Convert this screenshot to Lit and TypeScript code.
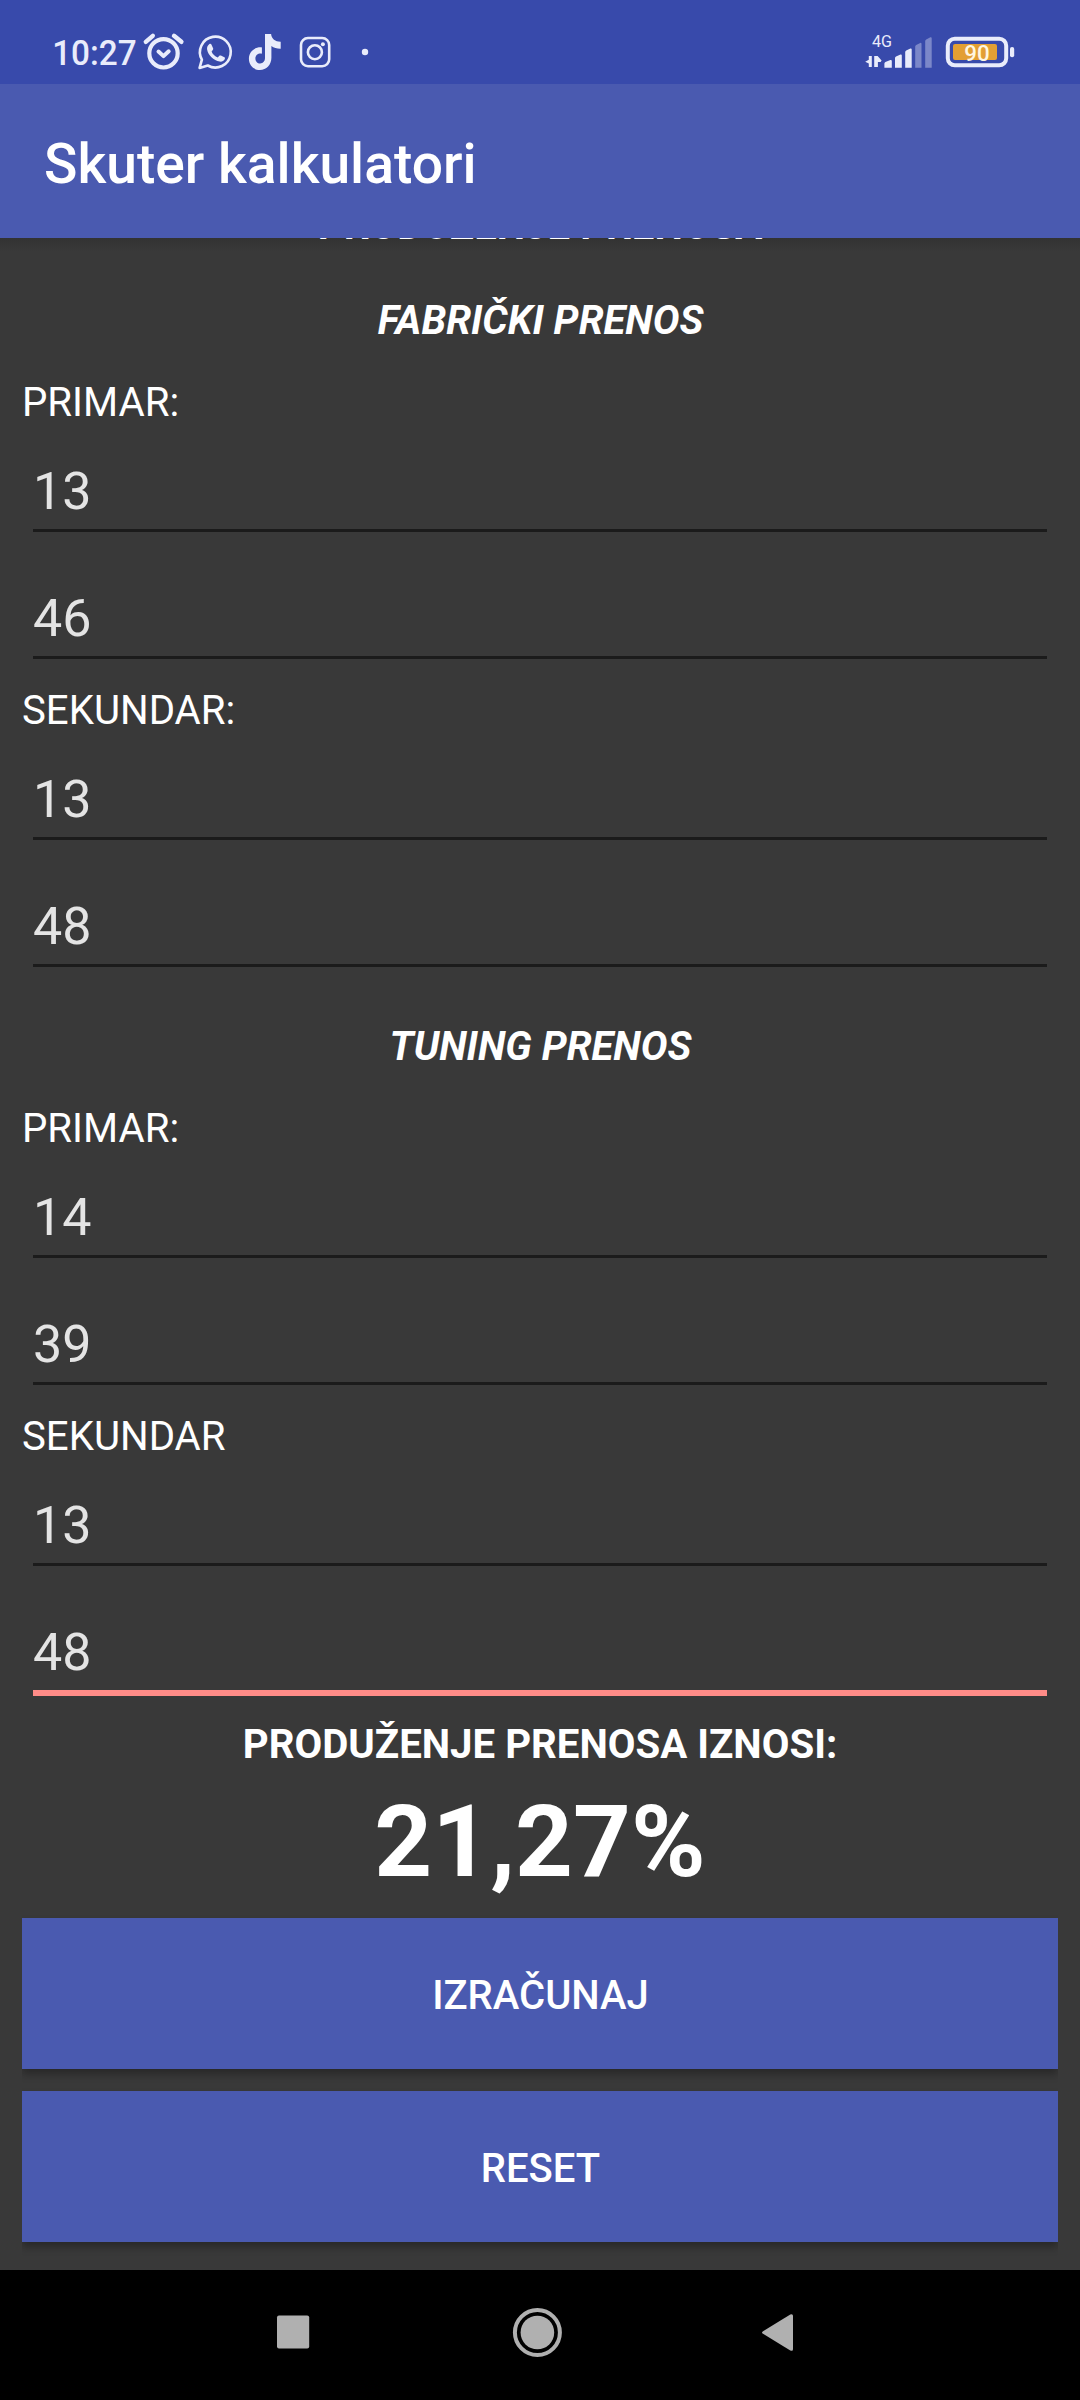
import { LitElement, html, css, svg } from "lit";
import { customElement, property } from "lit/decorators.js";
import { classMap } from "lit/directives/class-map.js";

@customElement("status-bar")
class StatusBar extends LitElement {
  static styles = css`
    :host {
      display: block;
      height: 84px;
      background: #384aab;
      color: #e9ecfb;
      font-family: Roboto, "Liberation Sans", sans-serif;
    }
    svg {
      display: block;
      width: 1080px;
      height: 84px;
    }
    .clock {
      font-size: 34.4px;
      font-weight: 500;
    }
    .net {
      font-size: 16px;
    }
    .charge {
      font-size: 22.8px;
      font-weight: 500;
      fill: #fff6e0;
    }
  `;

  render() {
    return html`<svg viewBox="0 0 1080 84" fill="#e9ecfb">
      ${svg`
        <text class="clock" x="52.2" y="65" textLength="84.5" lengthAdjust="spacingAndGlyphs">10:27</text>

        <g fill="none" stroke="#e9ecfb" stroke-width="4.4" stroke-linecap="round" stroke-linejoin="round">
          <circle cx="163.5" cy="53.3" r="14.2" stroke-width="4.2" />
          <path d="M158.5 51.5l5 4.6 5.2-4.8" stroke-width="4" />
          <path d="M145.8 41.8l7-6M174 35.8l7.4 6" />
        </g>

        <path d="M199.6 67.9l2.3-8.3a15.4 15.4 0 1 1 5.9 5.9z" fill="none" stroke="#e9ecfb" stroke-width="2.6" stroke-linejoin="round" />
        <path d="M209.4 44c.7-.4 1.6-.4 2 .4l1.7 3.9c.3.7 0 1.3-.5 1.9l-1 1.2c.9 2.6 3.300 5 6.200 6.100l1.500-1.700c.500-.500 1.100-.500 1.600-.300l3.500 1.700c.7.400.6 1.200.3 2-.8 2-3.100 2.700-5 2.400-6.200-1.200-11.500-6.200-12.600-12-.3-2 .4-4.300 2.300-5.600z" />

        <path d="M265 34h6.100c.4 4.900 4.400 7.800 9.600 7.700v7c-3.500.1-6.800-.9-9.300-2.700v11.800c0 7-5 12.200-11.500 12.200s-11-5-11-11.200c0-7 5.500-12 13-11.400v6.300c-3.500-.7-6.500 1.500-6.500 4.700 0 2.900 2 5 4.700 5 3 0 4.900-2.200 4.900-5.300z" />

        <g fill="none" stroke="#e9ecfb">
          <rect x="301" y="38" width="28.200" height="28.200" rx="7" stroke-width="2.600" />
          <circle cx="314.900" cy="52.200" r="7" stroke-width="2.600" />
        </g>
        <circle cx="322.900" cy="44.200" r="2" />
        <circle cx="365" cy="52" r="3.200" />

        <text class="net" x="872" y="46.700" textLength="20" lengthAdjust="spacingAndGlyphs">4G</text>
        <path d="M871.800 56v10.900h-3v-3.300l-3.600-1.800 3.600-2v-3.800zM874.200 56h3.400l4 4.600-1 1.400h-2.700v4.900h-3.700z" />
        <path d="M884.400 63.500q0-1 1-1.600l5-1.900q1.400-.3 1.400 1v6.800h-7.400zM895 58q0-1 1-1.500l4.500-2q1.300-.4 1.300 1v12.300H895zM905.200 52q0-1 1-1.600l4.200-1.900q1.300-.3 1.300 1v18.300h-6.500z" />
        <path opacity=".38" d="M915.200 46.500q0-1 1-1.600l4-2q1.300-.3 1.300 1v23.900h-6.300zM925.200 41q0-1 1-1.600l4.200-2.200q1.300-.3 1.300 1v29.600h-6.500z" />

        <rect x="947.800" y="38.700" width="58.400" height="26.600" rx="7" fill="none" stroke="#e9ecfb" stroke-width="4" />
        <rect x="953" y="44" width="44" height="16" rx="2" fill="#e39f33" />
        <rect x="1010" y="47" width="4.200" height="10.300" rx="2" />
        <text class="charge" x="964.300" y="60.800" textLength="25.400" lengthAdjust="spacingAndGlyphs">90</text>
      `}
    </svg>`;
  }
}

@customElement("number-field")
class NumberField extends LitElement {
  @property() value = "";
  @property({ type: Boolean }) active = false;

  static styles = css`
    :host {
      display: block;
      height: 127px;
      padding: 0 11px;
      box-sizing: border-box;
    }
    .box {
      box-sizing: border-box;
      height: 106px;
      padding-top: 35px;
      border-bottom: 3px solid #1b1b1b;
      color: #e4e4e4;
      font-size: 52px;
      line-height: 61px;
    }
    .active {
      height: 109px;
      border-bottom: 6px solid #ff8c88;
    }
  `;

  render() {
    return html`<div class=${classMap({ box: true, active: this.active })}>${this.value}</div>`;
  }
}

@customElement("app-root")
class AppRoot extends LitElement {
  static styles = css`
    :host {
      display: flex;
      flex-direction: column;
      width: 1080px;
      height: 2400px;
      overflow: hidden;
      background: #393939;
      color: #fff;
      font-family: Roboto, "Liberation Sans", sans-serif;
    }
    .toolbar {
      flex: none;
      box-sizing: border-box;
      height: 154px;
      padding: 48px 44px 0;
      background: #4a5ab0;
      font-size: 55.2px;
      font-weight: 500;
      line-height: 64px;
    }
    .page {
      flex: 1;
      min-height: 0;
      overflow: hidden;
      padding: 0 22px;
      background: linear-gradient(#323232, #393939 14px);
      display: flex;
      flex-direction: column;
      font-size: 40.2px;
      line-height: 47px;
    }
    .page > * {
      flex: none;
      box-sizing: border-box;
    }
    .center {
      text-align: center;
      font-weight: 700;
    }
    .cut {
      margin-top: -36px;
      height: 60px;
    }
    .section {
      height: 110px;
      padding: 35px 0 0 1px;
      font-size: 40px;
      font-style: italic;
    }
    .label {
      height: 54px;
      padding-top: 7px;
    }
    .amount {
      height: 150px;
      padding-top: 14px;
      line-height: 119px;
      font-size: 101px;
    }
    .button {
      height: 151px;
      margin-bottom: 22px;
      padding-left: 1px;
      background: #4a5ab0;
      box-shadow: 0 5px 8px rgba(0, 0, 0, 0.3);
      clip-path: inset(-3px 0 -14px 0);
      text-align: center;
      font-size: 40px;
      font-weight: 500;
      line-height: 155px;
    }
    .nav {
      flex: none;
      height: 130px;
      background: #000;
    }
    .nav svg {
      display: block;
    }
  `;

  render() {
    return html`
      <status-bar></status-bar>
      <div class="toolbar">Skuter kalkulatori</div>
      <div class="page">
        <div class="center cut">PRODUŽENJE PRENOSA</div>
        <div class="center section">FABRIČKI PRENOS</div>
        <div class="label">PRIMAR:</div>
        <number-field value="13"></number-field>
        <number-field value="46"></number-field>
        <div class="label">SEKUNDAR:</div>
        <number-field value="13"></number-field>
        <number-field value="48"></number-field>
        <div class="center section">TUNING PRENOS</div>
        <div class="label">PRIMAR:</div>
        <number-field value="14"></number-field>
        <number-field value="39"></number-field>
        <div class="label">SEKUNDAR</div>
        <number-field value="13"></number-field>
        <number-field value="48" active></number-field>
        <div class="center label">PRODUŽENJE PRENOSA IZNOSI:</div>
        <div class="center amount">21,27%</div>
        <div class="button">IZRAČUNAJ</div>
        <div class="button">RESET</div>
      </div>
      <div class="nav">
        <svg width="1080" height="130" viewBox="0 0 1080 130" fill="#b0b0b0">
          <rect x="277" y="45.500" width="32.200" height="33" rx="2" />
          <circle cx="537.400" cy="62.500" r="16.800" />
          <circle cx="537.400" cy="62.500" r="22.500" fill="none" stroke="#b0b0b0" stroke-width="4" />
          <path d="M763 61.200L790.300 44.500q2.700-1 2.700 1.500v33q0 2.700-2.700 1.500L763 63.800q-2-1.300 0-2.600z" />
        </svg>
      </div>
    `;
  }
}
